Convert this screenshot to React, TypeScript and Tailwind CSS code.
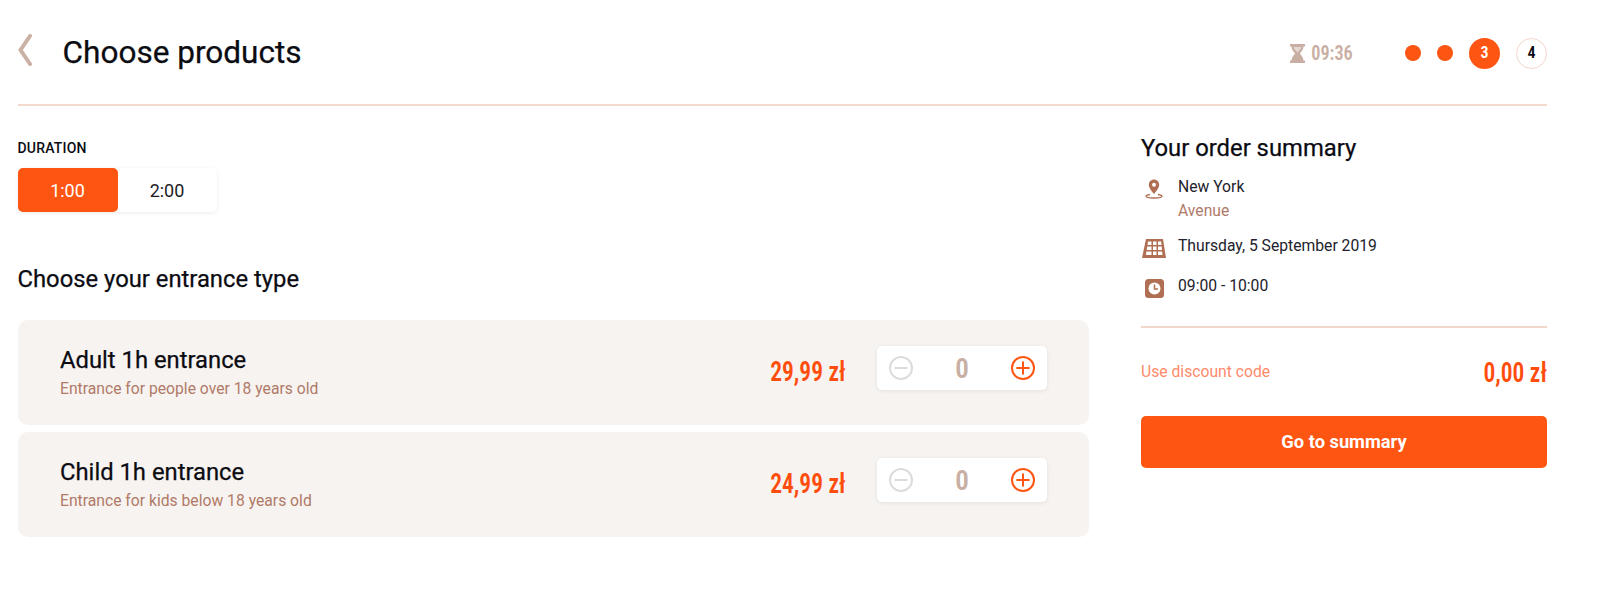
import { Plus, Minus } from "lucide-react";

const condensed = "font-semibold font-stretch-condensed";
const squeezed = "inline-block origin-right scale-x-[0.87]";
const heading = "font-normal [-webkit-text-stroke:0.25px]";

const products = [
  { name: "Adult 1h entrance", note: "Entrance for people over 18 years old", price: "29,99 zł" },
  { name: "Child 1h entrance", note: "Entrance for kids below 18 years old", price: "24,99 zł" },
];

function Hourglass() {
  return (
    <svg width="15" height="19" viewBox="0 0 15 19" fill="#c9afa3">
      <path d="M0 0h15v2.500h-1.500c0 3-2 5-3.700 7 1.700 2 3.700 4 3.700 7H15V19H0v-2.500h1.500c0-3 2-5 3.700-7C3.500 7.500 1.500 5.500 1.500 2.500H0z" />
      <path d="M3.600 3h7.800c-.3 2-2.200 3.800-3.900 5.500C5.800 6.800 3.900 5 3.600 3z" fill="#fff" opacity=".5" />
    </svg>
  );
}

function PinIcon() {
  return (
    <svg width="18" height="20" viewBox="0 0 18 20" fill="none">
      <path d="M9 0.500c-3 0-5.200 2.300-5.200 5.200 0 3 3 6.500 5.200 9.300 2.200-2.800 5.200-6.300 5.200-9.300C14.200 2.800 12 .5 9 .5z" fill="#b06f52" />
      <circle cx="9" cy="5.700" r="2" fill="#fff" />
      <path d="M5 15.500c-2.500.4-4 1-4 1.800C1 18.400 5 19 9 19s8-.6 8-1.700c0-.8-1.500-1.400-4-1.800" stroke="#b06f52" strokeWidth="1.400" />
    </svg>
  );
}

function CalendarIcon() {
  return (
    <svg width="24" height="20" viewBox="0 0 24 20">
      <path d="M4 0h17l3 19H0z" fill="#b06f52" />
      <g fill="#fff">
        <path d="M6 2.500h3.500v3.500H5.500zM11 2.500h3.500V6H11zM16 2.500h3.200l.3 3.500H16z" />
        <path d="M5.200 7.500h4.300v3.500H4.700zM11 7.500h3.500V11H11zM16 7.500h3.700l.3 3.500h-4z" />
        <path d="M4.400 12.500h5.100V16H3.900zM11 12.500h3.500V16H11zM16 12.500h4.100l.4 3.500H16z" />
      </g>
    </svg>
  );
}

function ClockIcon() {
  return (
    <svg width="19" height="19" viewBox="0 0 19 19">
      <rect width="19" height="19" rx="3.500" fill="#b06f52" />
      <circle cx="9.500" cy="9.500" r="6" fill="#fff" />
      <path d="M9.500 5.500v4.500h3.500" fill="none" stroke="#b06f52" strokeWidth="1.500" />
    </svg>
  );
}

function RoundButton({ active, children }: { active: boolean; children: React.ReactNode }) {
  return (
    <span
      className={
        active
          ? "flex h-6 w-6 items-center justify-center rounded-full border-2 border-[#ff5512] text-[#ff5512]"
          : "flex h-6 w-6 items-center justify-center rounded-full border-2 border-[#dedcda] text-[#dedcda]"
      }
    >
      {children}
    </span>
  );
}

export default function App() {
  return (
    <div className="h-[592px] w-[1600px] overflow-hidden bg-white pl-[17.500px] pr-[53px] font-['Roboto',sans-serif] text-[#0b0b12]">
      <header className="flex h-[106px] items-center border-b-2 border-[#f4d9cd] pt-[2px]">
        <svg width="14" height="32" viewBox="0 0 14 32" fill="none" className="mb-[6px]">
          <path d="M12 2L2.500 16 12 30" stroke="#cbb0a4" strokeWidth="4" strokeLinecap="round" />
        </svg>
        <h1 className={`ml-[31px] text-[31.550px] leading-none ${heading}`}>Choose products</h1>
        <div className="ml-auto flex items-center">
          <Hourglass />
          <span className={`text-[21px] leading-none text-[#c9afa3] ${condensed} ${squeezed}`}>09:36</span>
          <span className="ml-[52px] h-4 w-4 rounded-full bg-[#ff5512]" />
          <span className="ml-[16px] h-4 w-4 rounded-full bg-[#ff5512]" />
          <span className={`ml-[16px] flex h-[31px] w-[31px] items-center justify-center rounded-full bg-[#ff5512] text-[16px] text-white ${condensed}`}>3</span>
          <span className={`ml-[16px] flex h-[31px] w-[31px] items-center justify-center rounded-full border-[1.500px] border-[#f3d6ca] text-[16px] ${condensed}`}>4</span>
        </div>
      </header>

      <main className="flex gap-[52px]">
        <section className="w-[1071.500px]">
          <div className="mt-[34px] text-[14px] font-medium leading-[16px] tracking-[0.2px]">DURATION</div>
          <div className="mt-[12px] flex h-[44px] w-[199px] rounded-[5px] bg-white text-[18px] text-[#1c1c24] shadow-[0_1px_4px_rgba(0,0,0,0.08)]">
            <div className="flex w-[100px] items-center justify-center rounded-[5px] bg-[#ff5512] text-white">1:00</div>
            <div className="flex flex-1 items-center justify-center">2:00</div>
          </div>
          <h2 className={`mt-[53px] text-[23.800px] leading-[28px] ${heading}`}>Choose your entrance type</h2>
          <div className="mt-[27px] flex flex-col gap-[7px]">
            {products.map((p) => (
              <div key={p.name} className="flex h-[105px] items-center rounded-[10px] bg-[#f7f3f0] pl-[42.500px] pr-[42px]">
                <div className="pt-px">
                  <div className={`text-[23.800px] leading-[26px] ${heading}`}>{p.name}</div>
                  <div className="mt-[6px] text-[15.700px] leading-[20px] text-[#b07a68]">{p.note}</div>
                </div>
                <div className={`ml-auto text-[27px] leading-none text-[#ff4d0d] ${condensed} ${squeezed}`}>{p.price}</div>
                <div className="mb-[10px] ml-[32px] flex h-[44px] w-[170px] items-center justify-between rounded-[5px] bg-white px-[12px] shadow-[0_1px_4px_rgba(0,0,0,0.08)]">
                  <RoundButton active={false}><Minus size={20} strokeWidth={2.400} /></RoundButton>
                  <span className={`mt-[4px] text-[27px] leading-none text-[#c9afa3] ${condensed}`}>0</span>
                  <RoundButton active={true}><Plus size={20} strokeWidth={2.400} /></RoundButton>
                </div>
              </div>
            ))}
          </div>
        </section>

        <aside className="w-[406px]">
          <h2 className={`mt-[27px] text-[23.800px] leading-[30px] ${heading}`}>Your order summary</h2>
          <div className="mt-[14px] flex flex-col text-[15.700px] leading-[20px] text-[#22222c]">
            <div className="flex">
              <div className="flex w-[37px] justify-center pr-[11px] pt-[2px]"><PinIcon /></div>
              <div>
                <div>New York</div>
                <div className="mt-[4px] text-[#b07a68]">Avenue</div>
              </div>
            </div>
            <div className="mt-[15px] flex">
              <div className="flex w-[37px] justify-center pr-[11px] pt-[3px]"><CalendarIcon /></div>
              <div>Thursday, 5 September 2019</div>
            </div>
            <div className="mt-[17px] flex">
              <div className="flex w-[37px] justify-center pr-[11px] pt-[3px]"><ClockIcon /></div>
              <div>09:00 - 10:00</div>
            </div>
          </div>
          <div className="mt-[28px] h-[2px] bg-[#f3d6ca]" />
          <div className="mt-[31px] flex items-center justify-between">
            <span className="mb-[3px] text-[15.700px] text-[#ff8a6b]">Use discount code</span>
            <span className={`mt-px text-[27px] leading-none text-[#ff4d0d] ${condensed} ${squeezed}`}>0,00 zł</span>
          </div>
          <button className="mt-[29px] flex h-[52px] w-full items-center justify-center rounded-[5px] bg-[#ff5512] text-[18.300px] font-bold text-white">
            Go to summary
          </button>
        </aside>
      </main>
    </div>
  );
}
